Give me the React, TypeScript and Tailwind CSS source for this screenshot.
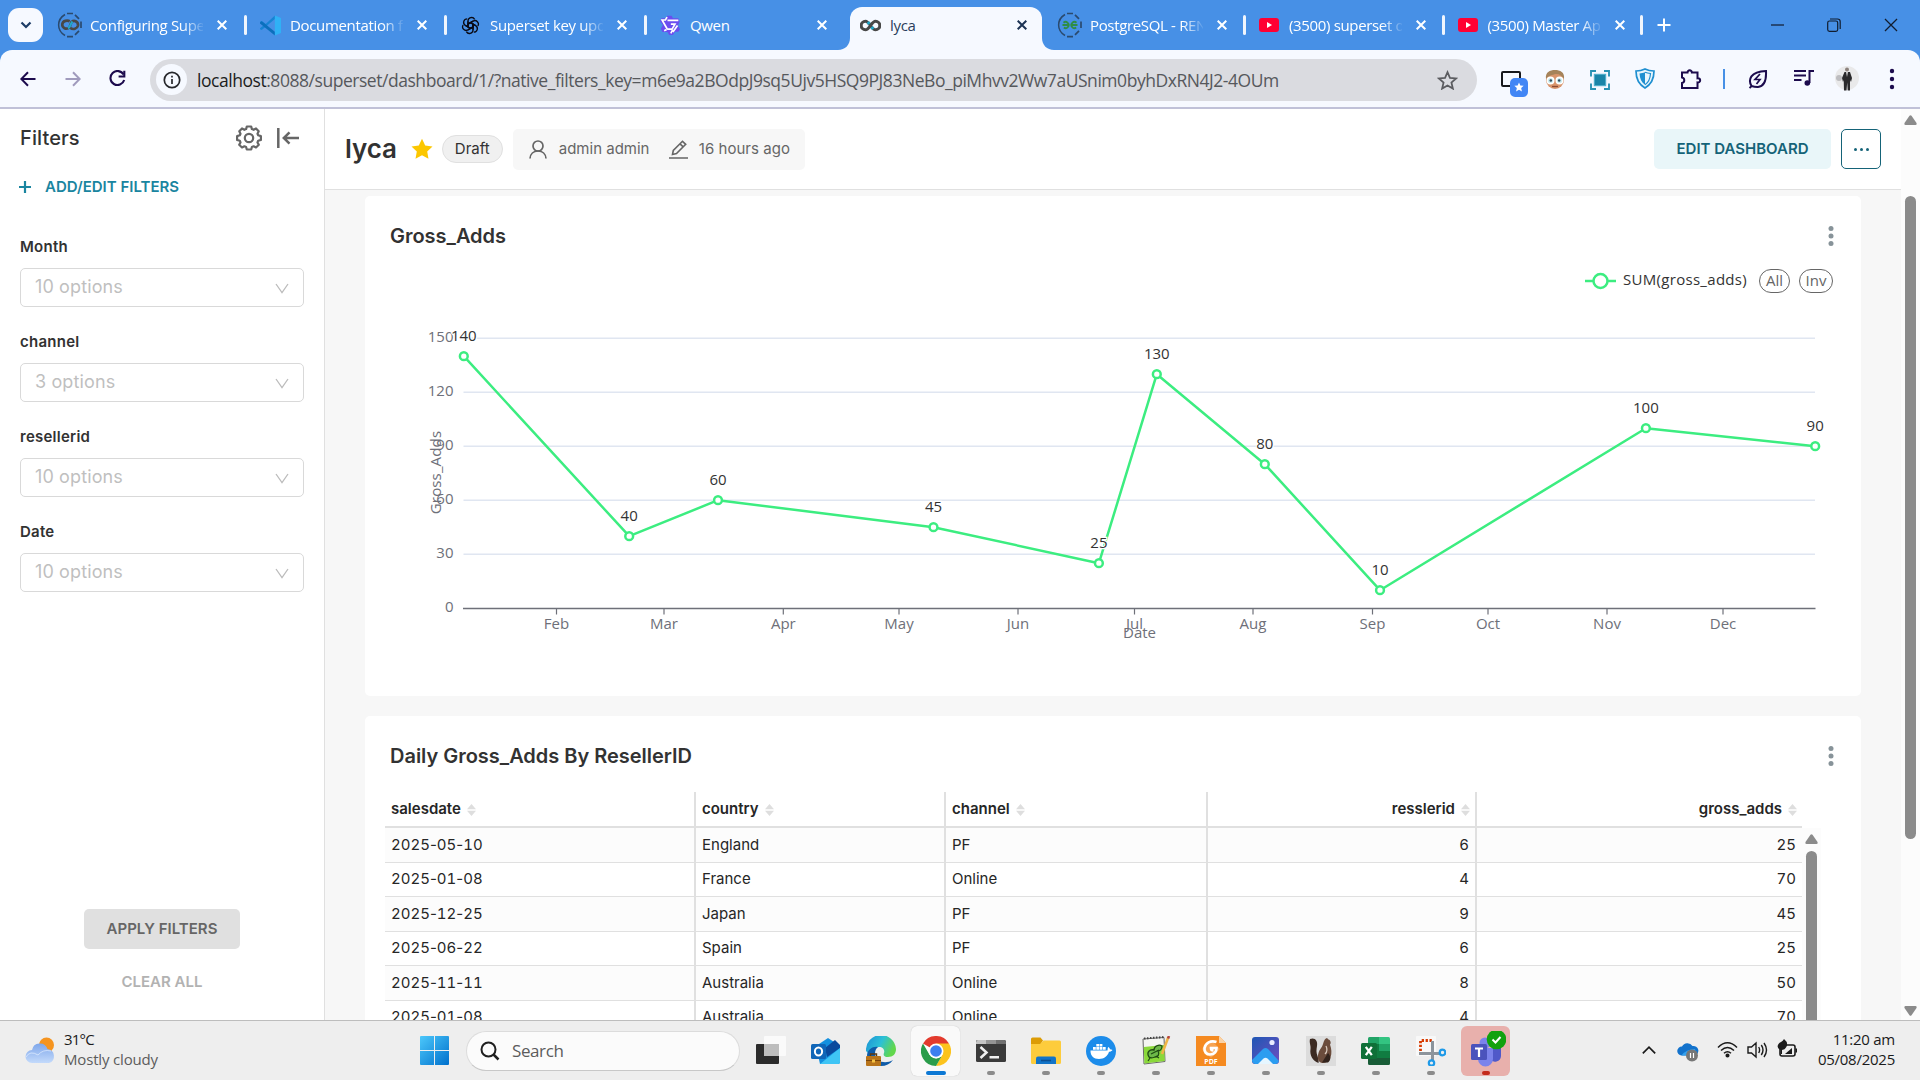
import React from "react";

type Kids = { children?: React.ReactNode };

const SEGOE = "font-['Open_Sans','Noto_Sans',sans-serif]";

/* ---------- Browser tabs ---------- */

function SupersetDocsIcon({ color, glyph }: { color: string; glyph: string }) {
  return (
    <svg width="26" height="26" viewBox="0 0 26 26" fill="none">
      <path d="M8 2.500C-.5 7.500-.5 18.500 8 23.500" stroke="#2b4a6e" strokeWidth="1.500" />
      <path d="M10 1.500h6M18 2.800l4 4M24 9.500v6.500M22 18.800l-4 4M10 24.700h6" stroke="#2b4a6e" strokeWidth="1.700" />
      {glyph === "s" ? (
        <>
          <path d="M12.700 9.200C10.500 8 6 8.500 5.300 12c-.5 4 4 6 7.200 3.500l2-5.500c3-2.500 7 0 6.500 3.500-.7 3.300-5 4.500-7.500 2.500" stroke={color} strokeWidth="2.700" />
          <path d="M11 16.300c2.500-1 2.500-5 4.500-6.800" stroke="#20a7c9" strokeWidth="2.300" />
        </>
      ) : (
        <path d="M5.500 13h7M20.500 13h-7M6.500 10.700a3.100 3.100 0 1 1 .3 4.900M19.500 10.700a3.100 3.100 0 1 0-.3 4.900" stroke={color} strokeWidth="1.800" />
      )}
    </svg>
  );
}

function VsCodeIcon() {
  return (
    <svg width="21" height="21" viewBox="0 0 24 24">
      <path d="M17 0.500L6.500 10.200 2 6.800 0 7.800v1.300L4 12l-4 3v1.200l2 1L17 4.500z" fill="#1684d4" />
      <path d="M0 8.500l2-1.500L17 19v4.500L0 9.600z" fill="#0b6fbd" />
      <path d="M17 .500L24 3.500v17L17 23.500z" fill="#2fb1f5" />
    </svg>
  );
}

function OpenAiIcon() {
  return (
    <svg width="19" height="19" viewBox="0 0 24 24" fill="none" stroke="#0a0a14" strokeWidth="1.700">
      {[0, 60, 120, 180, 240, 300].map((a) => (
        <path key={a} transform={`rotate(${a} 12 12)`} d="M8.800 13.900V6.300a4.500 4.500 0 0 1 8.400-2.100M8.800 10.200l3.200-1.900 6.300 3.700" />
      ))}
    </svg>
  );
}

function QwenIcon() {
  return (
    <svg width="20" height="20" viewBox="0 0 24 24">
      <path d="M9 1h5l1.500 3H22l1.500 4-2 4.500L24 17l-2 3h-4L15.500 24H11l-2-3.500H3L1 16.500 3.500 12 0 7.500 2 4h5z" fill="#6b4df0" />
      <path d="M8.500 2.500L6.500 6H2.500l6 10.500M9 6.500h13M21 12.500l-5.500 8M8.500 17h6l3.500-6h-5M5 19l3-1.500M13 22l2-4" stroke="#fff" strokeWidth="2" fill="none" />
    </svg>
  );
}

function SupersetIcon() {
  return (
    <svg width="21" height="13" viewBox="0 0 21 13" fill="none">
      <path d="M10.500 6.500C8.700 4 7.500 2.200 5.500 2.200a4.200 4.200 0 0 0 0 8.600c2 0 3.200-1.800 5-4.300s3-4.300 5-4.300a4.200 4.200 0 0 1 0 8.600c-2 0-3.200-1.800-5-4.300z" stroke="#484848" strokeWidth="3" />
      <path d="M7.800 3l1.700 2M13.200 10l-1.700-2" stroke="#20a7c9" strokeWidth="3" />
    </svg>
  );
}

function YouTubeIcon() {
  return (
    <svg width="20" height="14" viewBox="0 0 20 14">
      <rect width="20" height="14" rx="3" fill="#ff0033" />
      <path d="M8 4v6l5-3z" fill="#fff" />
    </svg>
  );
}

function Cross({ size = 10, color = "#fff", w = 2 }: { size?: number; color?: string; w?: number }) {
  return (
    <svg width={size} height={size} viewBox="0 0 10 10" className="shrink-0">
      <path d="M.7 .7l8.600 8.600M9.300 .7L.7 9.300" stroke={color} strokeWidth={w} />
    </svg>
  );
}

function Tab({ icon, title, width = "w-[200px]", sep, fade }: { icon: React.ReactNode; title: string; width?: string; sep?: boolean; fade?: boolean }) {
  return (
    <div className={`flex h-full shrink-0 items-center ${width}`}>
      <div className="flex w-[44px] shrink-0 items-center justify-center pl-[4px]">
        <div className="flex w-[27px] items-center justify-center">{icon}</div>
      </div>
      <div className={`w-[113px] shrink-0 overflow-hidden whitespace-nowrap text-[15px] leading-5 tracking-[-0.34px] text-white ${fade ? "[mask-image:linear-gradient(to_right,#000_82%,transparent_102%)]" : ""}`}>
        {title}
      </div>
      <div className="flex w-[38px] shrink-0 justify-center">
        <Cross />
      </div>
      <div className="grow" />
      {sep && <div className="h-5 w-[3px] shrink-0 translate-x-[1px] rounded-full bg-[#f0f5fd]" />}
    </div>
  );
}

function TabBar() {
  return (
    <div className="flex h-[50px] shrink-0 bg-[#4790e6]">
      <div className="flex w-[46px] shrink-0 items-center pl-2">
        <div className="flex h-[34px] w-[35px] items-center justify-center rounded-[11px] bg-[#f6f9ff]">
          <svg width="12" height="8" viewBox="0 0 12 8" fill="none">
            <path d="M1.500 1.500L6 6l4.500-4.500" stroke="#1d3c66" strokeWidth="2.200" />
          </svg>
        </div>
      </div>
      <Tab icon={<SupersetDocsIcon color="#484848" glyph="s" />} title="Configuring Superset" sep fade />
      <Tab icon={<VsCodeIcon />} title="Documentation for" sep fade />
      <Tab icon={<OpenAiIcon />} title="Superset key update" sep fade />
      <Tab icon={<QwenIcon />} title="Qwen" />
      <div className="flex w-[200px] shrink-0 items-end">
        <svg width="12" height="12" viewBox="0 0 12 12" className="-ml-[8px] shrink-0">
          <path d="M12 0v12H0C7 12 12 7 12 0z" fill="#f6f9ff" />
        </svg>
        <div className="flex h-[43px] w-[192px] shrink-0 items-center rounded-t-[12px] bg-[#f6f9ff] pb-[7px]">
          <div className="w-[40px] shrink-0 pl-[10px]">
            <SupersetIcon />
          </div>
          <div className="w-[113px] text-[15px] leading-5 tracking-[-0.3px] text-[#2a3d5c]">lyca</div>
          <div className="flex w-[38px] justify-center">
            <Cross color="#1c3354" />
          </div>
        </div>
        <svg width="12" height="12" viewBox="0 0 12 12" className="shrink-0">
          <path d="M0 0v12h12C5 12 0 7 0 0z" fill="#f6f9ff" />
        </svg>
      </div>
      <Tab icon={<SupersetDocsIcon color="#2f8d46" glyph="g" />} title="PostgreSQL - RENAME" width="w-[199px]" sep fade />
      <Tab icon={<YouTubeIcon />} title="(3500) superset dash" width="w-[198.5px]" sep fade />
      <Tab icon={<YouTubeIcon />} title="(3500) Master Apache" width="w-[198.5px]" sep fade />
      <div className="flex w-[43px] items-center justify-center">
        <svg width="14" height="14" viewBox="0 0 14 14">
          <path d="M7 .5v13M.5 7h13" stroke="#fff" strokeWidth="2" />
        </svg>
      </div>
      <div className="grow" />
      <div className="flex w-[171px] items-center justify-between pl-[22px] pr-[22px] pb-[1px]">
        <svg width="13" height="14" viewBox="0 0 13 14">
          <path d="M0 7h13" stroke="#111c2e" strokeWidth="1.200" />
        </svg>
        <svg width="14" height="14" viewBox="0 0 14 14" fill="none" stroke="#111c2e" strokeWidth="1.200">
          <rect x=".7" y="3" width="10" height="10.300" rx="1.800" />
          <path d="M3 1h7.500a2.700 2.700 0 0 1 2.700 2.700V11" />
        </svg>
        <Cross size={14} color="#111c2e" w={0.9} />
      </div>
    </div>
  );
}

/* ---------- Browser toolbar ---------- */

function Toolbar() {
  const ink = "#1c0b4d";
  return (
    <div className="flex bg-[#4790e6]">
      <div className="flex h-[59px] w-full items-center rounded-t-[12px] border-b-2 border-[#c0c1d8] bg-[#f6f9ff]">
        <div className="flex w-[150px] shrink-0 items-center pl-[20px]">
          <svg width="16" height="16" viewBox="0 0 16 16" fill="none" stroke={ink} strokeWidth="2">
            <path d="M15.500 8H1.500M8 1.300L1.300 8 8 14.700" />
          </svg>
          <svg width="16" height="16" viewBox="0 0 16 16" fill="none" stroke="#a09bbd" strokeWidth="2" className="ml-[29px]">
            <path d="M.5 8h14M8 1.300L14.700 8 8 14.700" />
          </svg>
          <svg width="17" height="17" viewBox="0 0 17 17" fill="none" stroke={ink} strokeWidth="2.100" className="ml-[28px]">
            <path d="M14.600 4.600A7 7 0 1 0 15.200 10" />
            <path d="M15.300 .8v5.700H9.600" />
          </svg>
        </div>
        <div className="flex h-[42px] w-[1327px] shrink-0 items-center rounded-full bg-[#dadbe0] pl-[6px] pr-[19px] translate-y-px">
          <div className="flex h-[31px] w-[31px] shrink-0 items-center justify-center rounded-full bg-[#f6f9ff]">
            <svg width="18" height="18" viewBox="0 0 18 18" fill="none" stroke="#26272b" strokeWidth="1.700">
              <circle cx="9" cy="9" r="7.700" />
              <path d="M9 8v5M9 4.800v1.800" />
            </svg>
          </div>
          <div className="ml-[10px] grow whitespace-nowrap text-[17.5px] leading-6 tracking-[-0.457px] text-[#56585c]">
            <span className="text-[#1c1d20]">localhost</span>:8088/superset/dashboard/1/?native_filters_key=m6e9a2BOdpJ9sq5Ujv5HSQ9PJ83NeBo_piMhvv2Ww7aUSnim0byhDxRN4J2-4OUm
          </div>
          <svg width="21" height="20" viewBox="0 0 24 23" fill="none" stroke="#5b5c60" strokeWidth="2">
            <path d="M12 2.500l2.800 6.600 7.100.6-5.400 4.700 1.700 7L12 17.700l-6.200 3.700 1.700-7L2.100 9.700l7.100-.6z" />
          </svg>
        </div>
        <div className="ml-[24px] flex grow items-center">
          <div className="relative h-[30px] w-[28px] translate-y-[7px]">
            <div className="h-[16px] w-[20px] rounded-[2px] border-2 border-[#17181c]" />
            <div className="absolute left-[9px] top-[7px] flex h-[19px] w-[18px] items-center justify-center rounded-[5px] bg-[#4286f5]">
              <svg width="10" height="10" viewBox="0 0 24 24" fill="#fff">
                <path d="M12 1l3.200 7.500 8 .7-6 5.300 1.800 8L12 18.300 5 22.500l1.800-8-6-5.300 8-.7z" />
              </svg>
            </div>
          </div>
          <svg width="22" height="22" viewBox="0 0 22 22" className="ml-[15px] translate-y-px">
            <circle cx="11" cy="11" r="9" fill="#d8956c" />
            <path d="M2 10C1 3 6 1 11 1s10 2 9 9c-2-3-4-5-8-5C8 6 5 6 2 10z" fill="#a5835a" />
            <circle cx="6.500" cy="11.500" r="3.300" fill="#cdeef2" stroke="#fff" strokeWidth="1.400" />
            <circle cx="15.500" cy="11.500" r="3.300" fill="#cdeef2" stroke="#fff" strokeWidth="1.400" />
            <circle cx="6.800" cy="11.500" r="1.300" fill="#2f4c5c" />
            <circle cx="15.200" cy="11.500" r="1.300" fill="#2f4c5c" />
            <path d="M8 17.500h6" stroke="#8c4a32" strokeWidth="1.300" />
          </svg>
          <svg width="20" height="20" viewBox="0 0 20 20" className="ml-[24px] translate-y-px" fill="none" stroke="#2a93b4" strokeWidth="1.900">
            <path d="M1 6.500V1h5M14 1h5v5.500M19 13.500V19h-5M6 19H1v-5.500" />
            <rect x="4.300" y="4.300" width="11.400" height="11.400" fill="#1a85a8" stroke="#4fb0cb" strokeWidth="1" />
          </svg>
          <svg width="20" height="21" viewBox="0 0 20 21" className="ml-[25px]">
            <path d="M1 3c3 0 6-.5 9-2 3 1.500 6 2 9 2 0 8-3 13.500-9 17C4 16.500 1 11 1 3z" fill="#e9f6fd" stroke="#1f8fd0" strokeWidth="1.700" />
            <path d="M4.500 5.500C6.500 5.300 8 5 10 4.200v12.600C6.500 14.500 4.800 10.500 4.500 5.500z" fill="#1f8fd0" />
            <path d="M10 4.200c2 .8 3.500 1.100 5.500 1.300-.3 5-2 9-5.500 11.300" fill="none" stroke="#1f8fd0" strokeWidth="1.200" />
          </svg>
          <svg width="22" height="22" viewBox="0 0 22 22" className="ml-[25px]" fill="none" stroke={ink} strokeWidth="2">
            <path d="M2 4.500h5.500a2.200 2.200 0 1 1 4.400 0H17.500v5.700a2.200 2.200 0 1 1 0 4.300V20H2v-5a2.800 2.800 0 0 0 0-5.500z" />
          </svg>
          <div className="ml-[21px] h-[20px] w-[2px] bg-[#4790e6]" />
          <svg width="20" height="20" viewBox="0 0 20 20" className="ml-[23px]" fill="none" stroke={ink} strokeWidth="2">
            <path d="M3 17.800L1.500 19M3.500 17C0 11 2 2.500 18 2c.5 10-1.500 15.500-8 16-2.500.1-5-.5-6.500-1z" />
            <path d="M12 5l-5 5.500h5L8.500 15" strokeWidth="1.700" />
          </svg>
          <svg width="20" height="18" viewBox="0 0 20 18" className="ml-[26px] -translate-y-px" fill="none" stroke={ink} strokeWidth="2">
            <path d="M0 2h12M0 6.500h12M0 11h7.500M15.500 14V2H20" />
            <circle cx="13.300" cy="14" r="2.800" fill={ink} stroke="none" />
          </svg>
          <svg width="26" height="26" viewBox="0 0 26 26" className="ml-[20px] -translate-y-px">
            <circle cx="13" cy="13" r="12" fill="#e9e9ea" />
            <circle cx="5" cy="13" r="3" fill="#bdbdc0" />
            <circle cx="13" cy="4.500" r="2" fill="#8b817c" />
            <path d="M10.500 7h5.500l2 6-1 4-1-2v10.500h-2.300l-.5-8-.7 8H10l-.3-10.500-.7 2-1-4z" fill="#2a2a2c" />
            <path d="M12.200 7h1.600l-.8 5z" fill="#fff" />
          </svg>
          <svg width="6" height="22" viewBox="0 0 6 22" className="ml-[29px]" fill={ink}>
            <circle cx="3" cy="3" r="2.200" />
            <circle cx="3" cy="11" r="2.200" />
            <circle cx="3" cy="19" r="2.200" />
          </svg>
        </div>
      </div>
    </div>
  );
}

/* ---------- Filter sidebar ---------- */

const filters = [
  { name: "Month", hint: "10 options" },
  { name: "channel", hint: "3 options" },
  { name: "resellerid", hint: "10 options" },
  { name: "Date", hint: "10 options" },
];

function Sidebar() {
  return (
    <aside className="flex w-[325px] shrink-0 flex-col border-r border-[#e0e0e0] bg-white">
      <div className="flex h-[58px] items-center pl-5 pr-[25px]">
        <h2 className="grow text-[20px] font-medium leading-6 tracking-[0.1px] text-[#323232]">Filters</h2>
        <svg width="26" height="26" viewBox="0 0 26 26" fill="none" stroke="#666" strokeWidth="2.200" strokeLinejoin="round">
          <path d="M10.800 1.500h4.400l.7 2.600 1.700.7 2.400-1.300 2.700 2.800-1.200 2.400.7 1.600 2.700.800v3.800l-2.700.800-.7 1.700 1.300 2.400-2.800 2.700-2.400-1.200-1.700.7-.7 2.500h-4.400l-.7-2.500-1.700-.7-2.400 1.200-2.800-2.700 1.300-2.400-.7-1.700-2.700-.8v-3.800l2.700-.8.7-1.600-1.200-2.400 2.700-2.800 2.400 1.300 1.700-.7z" />
          <circle cx="13" cy="13" r="4.200" />
        </svg>
        <svg width="22" height="20" viewBox="0 0 22 20" fill="none" stroke="#666" strokeWidth="2.500" className="ml-[15px]">
          <path d="M1.300 0v20M22 10H7M12.500 4.300L6.800 10l5.700 5.700" />
        </svg>
      </div>
      <div className="flex h-[40px] items-center pl-[19px] text-[#1a85a0]">
        <svg width="12" height="12" viewBox="0 0 12 12">
          <path d="M6 0v12M0 6h12" stroke="#1a85a0" strokeWidth="2.200" />
        </svg>
        <span className="ml-[14px] text-[15px] font-semibold">ADD/EDIT FILTERS</span>
      </div>
      <div className="mt-[29px] flex grow flex-col px-5">
        {filters.map((f) => (
          <div key={f.name} className="h-[95px]">
            <div className="flex h-[32px] items-start pt-px text-[15px] font-semibold leading-5 tracking-[0.25px] text-[#323232]">{f.name}</div>
            <div className="flex h-[39px] items-center justify-between rounded-[5px] border border-[#d9d9d9] pl-[14px] pr-[14px]">
              <span className="pb-[2px] text-[18px] leading-6 tracking-[0.12px] text-[#bfbfbf]">{f.hint}</span>
              <svg width="14" height="11" viewBox="0 0 14 11" fill="none" className="translate-y-px">
                <path d="M1 1l6 8.500L13 1" stroke="#bcbcbc" strokeWidth="1.300" />
              </svg>
            </div>
          </div>
        ))}
      </div>
      <div className="flex flex-col items-center pb-[28px]">
        <div className="flex h-10 w-[156px] items-center justify-center rounded-[5px] bg-[#e0e0e0] text-[15px] font-semibold text-[#666]">
          APPLY FILTERS
        </div>
        <div className="mt-[23px] text-[15px] font-semibold leading-5 text-[#b2b2b2]">CLEAR ALL</div>
      </div>
    </aside>
  );
}

/* ---------- Dashboard header ---------- */

function Header() {
  return (
    <header className="flex h-[81px] shrink-0 items-center border-b border-[#e0e0e0] bg-white pl-5 pr-5">
      <h1 className="text-[26px] font-semibold leading-8 tracking-[-0.1px] text-[#323232]">lyca</h1>
      <svg width="22" height="21" viewBox="0 0 24 23" fill="#fcc700" className="ml-[14px] -translate-y-px">
        <path d="M12 .8l3.500 7.300 8 1.100-5.800 5.600 1.400 8L12 19l-7.100 3.800 1.400-8L.5 9.200l8-1.100z" />
      </svg>
      <div className="ml-[9px] flex h-[28px] w-[61px] items-center justify-center rounded-full border border-[#e0e0e0] bg-[#f0f0f0] pt-px text-[15px] text-[#323232]">
        Draft
      </div>
      <div className="ml-[10px] flex h-[41px] w-[292px] items-center rounded-[5px] bg-[#f7f7f7] pl-[16px] text-[15px] text-[#666]">
        <svg width="18" height="19" viewBox="0 0 18 19" fill="none" stroke="#666" strokeWidth="1.700">
          <circle cx="9" cy="6" r="5" />
          <path d="M1 18.500C1.300 14 4.500 11 9 11s7.700 3 8 7.500" />
        </svg>
        <span className="ml-[12px] w-[91px] whitespace-nowrap pt-px">admin admin</span>
        <svg width="19" height="19" viewBox="0 0 19 19" fill="none" stroke="#666" strokeWidth="1.600" className="ml-[19px]">
          <path d="M0 18h19M3.500 14.500l.8-4L13.500 1.300l3.200 3L7.500 13.600zM11 3.800l3.200 3" />
        </svg>
        <span className="ml-[11px] pt-px tracking-[0.04px]">16 hours ago</span>
      </div>
      <div className="grow" />
      <div className="flex h-10 w-[177px] items-center justify-center rounded-[5px] bg-[#e9f6f9] text-[15px] font-semibold text-[#156378]">EDIT DASHBOARD</div>
      <div className="ml-[10px] flex h-10 w-10 items-center justify-center gap-[3px] rounded-[5px] border border-[#156378] bg-white">
        <i className="h-[3px] w-[3px] rounded-full bg-[#156378]" />
        <i className="h-[3px] w-[3px] rounded-full bg-[#156378]" />
        <i className="h-[3px] w-[3px] rounded-full bg-[#156378]" />
      </div>
    </header>
  );
}

function Card({ title, className, children }: { title: string; className: string } & Kids) {
  return (
    <section className={`flex w-[1496px] shrink-0 flex-col bg-white ${className}`}>
      <div className="flex h-[80px] shrink-0 items-center justify-between pl-[25px] pr-[27.5px]">
        <h3 className="text-[20px] font-semibold tracking-[-0.02px] text-[#323232]">{title}</h3>
        <svg width="6" height="20" viewBox="0 0 6 20" fill="#879399">
          <circle cx="3" cy="2.500" r="2.500" />
          <circle cx="3" cy="10" r="2.500" />
          <circle cx="3" cy="17.500" r="2.500" />
        </svg>
      </div>
      {children}
    </section>
  );
}

/* ---------- Line chart ---------- */

const points: [number, number][] = [
  [463.8, 140],
  [629.2, 40],
  [718, 60],
  [933.5, 45],
  [1098.9, 25],
  [1156.8, 130],
  [1264.8, 80],
  [1380, 10],
  [1645.9, 100],
  [1815.2, 90],
];
const months: [number, string][] = [
  [556.5, "Feb"],
  [664, "Mar"],
  [783.3, "Apr"],
  [899, "May"],
  [1018, "Jun"],
  [1134.5, "Jul"],
  [1253, "Aug"],
  [1372.5, "Sep"],
  [1488, "Oct"],
  [1607, "Nov"],
  [1723, "Dec"],
];
const yOf = (v: number) => 608.2 - v * 1.8;

function Chart() {
  return (
    <div className={SEGOE}>
      <div className="flex h-[10px] items-center justify-end pr-[28px] text-[15px] text-[#333]">
        <svg width="31" height="20" viewBox="0 0 31 20">
          <path d="M0 10h31" stroke="#3ced80" strokeWidth="2.500" />
          <circle cx="15.500" cy="10" r="7" fill="#fff" stroke="#3ced80" strokeWidth="2.500" />
        </svg>
        <span className="ml-[7px] w-[125px] whitespace-nowrap pb-[4px] tracking-[0.3px]">SUM(gross_adds)</span>
        <span className="ml-[11px] flex h-[24px] w-[31px] items-center justify-center rounded-full border border-[#666] pb-px text-[#666]">All</span>
        <span className="ml-[9px] flex h-[24px] w-[34px] items-center justify-center rounded-full border border-[#666] pb-px text-[#666]">Inv</span>
      </div>
      <svg width="1496" height="390" viewBox="365 286 1496 390" className="block" fontSize="15" fill="#6e7079">
        {[30, 60, 90, 120, 150].map((v) => (
          <path key={v} d={`M463.500 ${Math.round(yOf(v)) + 0.3}H1815`} stroke="#e0e6f1" strokeWidth="1.400" />
        ))}
        {[0, 30, 60, 90, 120, 150].map((v) => (
          <text key={v} x="453.500" y={yOf(v) + 4.2} textAnchor="end">
            {v}
          </text>
        ))}
        <path d="M463 608.500H1815.500" stroke="#6e7079" strokeWidth="1.300" />
        {months.map(([x, m]) => (
          <g key={m}>
            <path d={`M${x} 609v5.500`} stroke="#6e7079" strokeWidth="1.200" />
            <text x={x} y="629" textAnchor="middle">
              {m}
            </text>
          </g>
        ))}
        <text x="1139.500" y="638" textAnchor="middle">
          Date
        </text>
        <text transform="translate(441 472.500) rotate(-90)" textAnchor="middle" letterSpacing="0.150">
          Gross_Adds
        </text>
        <polyline points={points.map(([x, v]) => `${x},${yOf(v)}`).join(" ")} fill="none" stroke="#3ced80" strokeWidth="2.500" strokeLinejoin="bevel" />
        {points.map(([x, v]) => (
          <circle key={x} cx={x} cy={yOf(v)} r="3.900" fill="#fff" stroke="#3ced80" strokeWidth="2.500" />
        ))}
        {points.map(([x, v]) => (
          <text key={x} x={x} y={yOf(v) - 15.3} textAnchor="middle" fill="#333" stroke="#fff" strokeWidth="2.500" paintOrder="stroke">
            {v}
          </text>
        ))}
      </svg>
    </div>
  );
}

/* ---------- Table ---------- */

const rows = [
  ["2025-05-10", "England", "PF", "6", "25"],
  ["2025-01-08", "France", "Online", "4", "70"],
  ["2025-12-25", "Japan", "PF", "9", "45"],
  ["2025-06-22", "Spain", "PF", "6", "25"],
  ["2025-11-11", "Australia", "Online", "8", "50"],
  ["2025-01-08", "Australia", "Online", "4", "70"],
];
const cols = ["salesdate", "country", "channel", "resslerid", "gross_adds"];

function SortIcon() {
  return (
    <svg width="9" height="12" viewBox="0 0 9 12" fill="#dedede" className="ml-[6px]">
      <path d="M0 5.200L4.500 0 9 5.200zM0 6.800L4.500 12 9 6.800z" />
    </svg>
  );
}

/* Tabular digits keep the dates aligned; the hyphens stay proportional. */
function DateText({ value }: { value: string }) {
  return (
    <span>
      {value.split("-").map((part, i) => (
        <React.Fragment key={i}>
          {i > 0 && "-"}
          <span className="tabular-nums">{part}</span>
        </React.Fragment>
      ))}
    </span>
  );
}

const grid = "grid w-[1417px] grid-cols-[311px_250px_262px_269px_325px]";

function Table() {
  return (
    <div className="flex pl-[20px] text-[15px] text-[#262626]">
      <div className="-mt-[4px]">
        <div className={`${grid} h-[36px] border-b-2 border-[#e0e0e0] font-semibold`}>
          {cols.map((c, i) => (
            <div key={c} className={`flex items-center pl-[6px] pt-px ${i > 2 ? "justify-end pr-[5px]" : ""} ${i < 4 ? "border-r-2 border-[#e0e0e0]" : ""}`}>
              {c}
              <SortIcon />
            </div>
          ))}
        </div>
        {rows.map((r, n) => (
          <div key={n} className={`${grid} h-[34.5px] border-b border-[#e0e0e0] ${n % 2 ? "bg-white" : "bg-[#fcfcfc]"}`}>
            {r.map((v, i) => (
              <div key={i} className={`flex items-center pl-[6px] ${i > 2 ? "justify-end pr-[6px] tabular-nums" : ""} ${i < 4 ? "border-r-2 border-[#e0e0e0]" : ""}`}>
                {i === 0 ? <DateText value={v} /> : v}
              </div>
            ))}
          </div>
        ))}
      </div>
      <div className="mt-[32px] flex w-[19px] flex-col items-center bg-[#fcfcfc] pt-[6px]">
        <svg width="13" height="10" viewBox="0 0 13 10" fill="#8b8b8b">
          <path d="M5.500 .8q1-1.200 2 0L12.500 8q.5 2-1 2h-10q-1.500 0-1-2z" />
        </svg>
        <div className="mt-[7px] h-[300px] w-[11px] rounded-t-full bg-[#8b8b8b]" />
      </div>
    </div>
  );
}

/* ---------- Taskbar ---------- */

function AppCell({ children, bar = "gray", box = "" }: { bar?: "none" | "gray" | "blue" | "red"; box?: string } & Kids) {
  const bars = { none: "w-0", gray: "w-2 bg-[#8b8b8b]", blue: "w-5 bg-[#0c78d4]", red: "w-2 bg-[#c42b1c]" };
  return (
    <div className="flex w-[55px] justify-center">
      <div className={`flex h-[50px] w-[49px] flex-col items-center rounded-[6px] ${box}`}>
        <div className="flex h-[50px] w-full items-center justify-center">{children}</div>
        <div className={`-mt-[5px] h-1 shrink-0 rounded-full ${bars[bar]}`} />
      </div>
    </div>
  );
}

function Apps() {
  return (
    <>
      <AppCell bar="none">
        <svg width="30" height="30" viewBox="0 0 30 30">
          <rect x="0" y="8" width="23" height="20" rx="1" fill="#2b2b2b" />
          <rect x="8" y="0" width="22" height="20" rx="1" fill="#fafafa" />
          <rect x="8" y="8" width="15" height="12" fill="#bdbdbd" />
        </svg>
      </AppCell>
      <AppCell bar="none">
        <svg width="30" height="30" viewBox="0 0 30 30">
          <path d="M5 10L17 2l12 8v16a2 2 0 0 1-2 2H9z" fill="#1490df" />
          <path d="M14 12l10-8 5 5v3L16 21z" fill="#0a4a9e" />
          <path d="M9 28L29 12v14a2 2 0 0 1-2 2z" fill="#3fc5f5" />
          <rect x="0" y="8" width="15" height="15" rx="1.500" fill="#1066b8" />
          <ellipse cx="7.500" cy="15.500" rx="3.600" ry="4" fill="none" stroke="#fff" strokeWidth="2" />
        </svg>
      </AppCell>
      <AppCell bar="none">
        <svg width="30" height="30" viewBox="0 0 30 30">
          <defs>
            <linearGradient id="edge" x1="0" y1="0" x2="1" y2=".4">
              <stop offset="0" stopColor="#1b8fd6" />
              <stop offset=".55" stopColor="#2cc0d6" />
              <stop offset="1" stopColor="#62d74c" />
            </linearGradient>
          </defs>
          <path d="M0 15A15 15 0 0 1 30 13c0 5-3 8-8 8-4 0-5-2-4-4 1-3-1-6-5-6-5 0-8 4-8 9z" fill="url(#edge)" />
          <path d="M1 19c1-6 6-9 11-8-4 3-4 9 0 13 4 3 10 3 15 0-3 4-7 6-12 6C7 30 1 26 1 19z" fill="#0f5ba8" />
          <rect x="0" y="20" width="15" height="10" rx="1" fill="#b8741a" />
          <path d="M0 24.500h15" stroke="#7a4508" strokeWidth="1" />
          <path d="M4.500 20v-2h6v2" stroke="#5d3a12" strokeWidth="1.400" fill="none" />
          <rect x="6" y="23.500" width="3" height="3" fill="#f6c343" />
        </svg>
      </AppCell>
      <AppCell bar="blue" box="bg-[#f9f9f9] shadow-[0_0_1px_#b5b5b5]">
        <svg width="30" height="30" viewBox="0 0 30 30">
          <circle cx="15" cy="15" r="15" fill="#fff" />
          <path d="M15 15L2 7.500A15 15 0 0 1 28 7.500z" fill="#e33b2e" />
          <path d="M15 7.500H28A15 15 0 0 1 15 30l6.500-11.500z" fill="#fcc31e" />
          <path d="M2 7.500L8.500 18.700 15 22.500l5.500-2L15 30A15 15 0 0 1 2 7.500z" fill="#2a9c4a" />
          <circle cx="15" cy="15" r="7.500" fill="#fff" />
          <circle cx="15" cy="15" r="5.800" fill="#3c7ff0" />
        </svg>
      </AppCell>
      <AppCell>
        <svg width="30" height="22" viewBox="0 0 30 22">
          <rect width="30" height="22" rx="1.500" fill="#3a3a3a" />
          <path d="M1.500 0H10v4H0V1.500z" fill="#c4c4c4" />
          <path d="M10 0h10v4H10z" fill="#949494" />
          <path d="M20 0h8.500L30 1.500V4H20z" fill="#707070" />
          <path d="M4.500 7l6 5.500-6 5.500M13.500 17.300H23" stroke="#f0f0f0" strokeWidth="2.500" fill="none" />
        </svg>
      </AppCell>
      <AppCell>
        <svg width="30" height="28" viewBox="0 0 30 28">
          <path d="M0 2a1.500 1.500 0 0 1 1.500-1.500h8L12 3.500 9 8H0z" fill="#dc9c06" />
          <path d="M0 7h9l3.500-3.500H28.500A1.500 1.500 0 0 1 30 5v20.500a1.500 1.500 0 0 1-1.500 1.500h-27A1.500 1.500 0 0 1 0 25.500z" fill="#fdcc3c" />
          <path d="M5 27v-5.500a2 2 0 0 1 2-2h16a2 2 0 0 1 2 2V27z" fill="#1274c8" />
          <path d="M10 23.500h10" stroke="#0c4f92" strokeWidth="1.600" />
        </svg>
      </AppCell>
      <AppCell>
        <svg width="30" height="30" viewBox="0 0 30 30">
          <circle cx="15" cy="15" r="15" fill="#1c8cea" />
          <path d="M4.500 14.500h17c.3-1.500 0-2.500.8-3.500 1 .5 1.500 1.300 1.600 2.200 1 0 1.800.2 2.600.8-.8 1.300-2 1.700-3.500 1.800C21.500 20.500 18 23 13 23c-5.500 0-8.500-3-8.500-8.500z" fill="#fff" />
          <path d="M7 11h2.800v2.700H7zM10.300 11h2.800v2.700h-2.800zM13.600 11h2.800v2.700h-2.800zM16.900 11h2.800v2.700h-2.800zM10.300 8h2.800v2.600h-2.800zM13.600 8h2.800v2.600h-2.800z" fill="#fff" />
        </svg>
      </AppCell>
      <AppCell>
        <svg width="30" height="30" viewBox="0 0 30 30">
          <path d="M2 3l21-1.500 1 24-21 2.500z" fill="#f4f5f2" stroke="#666" strokeWidth="1" />
          <path d="M2.800 11l20.400-2 .6 16-20.400 2.500z" fill="#8ad83a" />
          <path d="M8 21c-3-5 1-8 5-7 0-4 5-6 8-4 0 3-2 5-4 5 2 3 0 6-3 6-2 1-5 1-6 0z" fill="#6cb848" stroke="#1f4a14" strokeWidth="1.300" />
          <path d="M10 18l8-4M9 22l-2 3M15 20l3 2" stroke="#1f4a14" strokeWidth="1.200" />
          <path d="M3 2.500l20-1.500" stroke="#444" strokeWidth="2" strokeDasharray="1.500 1.500" />
          <path d="M27 2l-6 16" stroke="#f0b548" strokeWidth="2.600" />
          <path d="M28 0l-1 2.500" stroke="#b8453a" strokeWidth="2.600" />
        </svg>
      </AppCell>
      <AppCell>
        <svg width="30" height="30" viewBox="0 0 30 30">
          <path d="M0 0h23l7 7v23H0z" fill="#f58a20" />
          <path d="M23 0v7h7z" fill="#fbd3a5" />
          <path d="M15 4l9 9-9 9-9-9z" fill="#f7a453" />
          <path d="M20.500 6c-6-2-11 1-12 6-.5 4 2 6.500 5.500 6.500 5 0 6.500-3.500 6.500-6.500h-5.500c0 2 1 2.500 2.500 2.500" stroke="#fff" strokeWidth="2.700" fill="none" />
          <text x="15" y="28" textAnchor="middle" fontSize="7" fontWeight="700" fill="#fff">PDF</text>
        </svg>
      </AppCell>
      <AppCell>
        <svg width="27" height="27" viewBox="0 0 27 27">
          <defs>
            <linearGradient id="photos" x1="0" y1="0" x2="1" y2="1">
              <stop offset="0" stopColor="#1e56b4" />
              <stop offset="1" stopColor="#6f4fc0" />
            </linearGradient>
          </defs>
          <rect width="27" height="27" rx="3" fill="url(#photos)" />
          <path d="M0 23l11-11q2.500-2 5 0l11 12q-1 3-3 3H3q-2 0-3-3z" fill="#2c9df0" />
          <path d="M6 27l5.500-5.500q2-1.500 4 0L21 27z" fill="#e6f6ff" />
          <circle cx="20" cy="5.500" r="2.600" fill="#e9edff" />
        </svg>
      </AppCell>
      <AppCell>
        <svg width="30" height="30" viewBox="0 0 30 30">
          <rect width="30" height="30" fill="#dcdcdc" />
          <path d="M4 3c5-2 8 2 7 7-.6 4-1 6 .5 10 .8 3 1.500 5 1 7-6-2-9-8-8-14C5 9 3 7 4 3z" fill="#3b2a22" />
          <path d="M17 8c1-4 2.500-6 4-6l1.500 1.500c2 .5 3 3.500 1.500 5 1.500 4 2 9 .5 13-1 4-4 5.500-8.500 5.500-4-1-5-5-3.500-10 1-4 3.500-5 4.500-9z" fill="#6b4c3c" />
          <path d="M20 10c1.500 3 1 6-1 8" stroke="#d8c8bc" strokeWidth="1.300" fill="none" />
          <path d="M22 17c3 3 3 7 0 9.500h-6z" fill="#33241d" />
        </svg>
      </AppCell>
      <AppCell>
        <svg width="29" height="28" viewBox="0 0 29 28">
          <path d="M7 1.500A1.500 1.500 0 0 1 8.500 0H18v7H7z" fill="#21a366" />
          <path d="M18 0h9.500A1.500 1.500 0 0 1 29 1.500V7H18z" fill="#33c481" />
          <path d="M7 7h11v14H7z" fill="#107c41" />
          <path d="M18 7h11v7H18z" fill="#21a366" />
          <path d="M18 14h11v7H18z" fill="#107c41" />
          <path d="M7 21h22v5.500a1.500 1.500 0 0 1-1.500 1.500h-19A1.500 1.500 0 0 1 7 26.500z" fill="#185c37" />
          <rect y="6" width="16" height="16" rx="1.500" fill="#0f7038" />
          <path d="M4.800 9.800l6 8.400M10.800 9.800l-6 8.400" stroke="#fff" strokeWidth="2.300" />
        </svg>
      </AppCell>
      <AppCell>
        <svg width="30" height="30" viewBox="0 0 30 30" fill="none">
          <rect width="20" height="20" rx="1" fill="#f8f8f8" />
          <path d="M4.500 15V4.500H16" stroke="#d83b01" strokeWidth="2.800" strokeDasharray="2.300 1.600" />
          <path d="M3 17.500h22M16.500 5v19" stroke="#8c949b" strokeWidth="3" />
          <circle cx="26.500" cy="16.500" r="2.800" stroke="#1f9ae8" strokeWidth="2.200" />
          <circle cx="15.500" cy="27" r="2.700" stroke="#1f9ae8" strokeWidth="2.200" />
        </svg>
      </AppCell>
      <AppCell bar="red" box="bg-[#e8b0ac]">
        <svg width="40" height="40" viewBox="0 0 40 40">
          <circle cx="19" cy="12" r="5.500" fill="#7b83eb" />
          <circle cx="31" cy="15" r="4" fill="#5059c9" />
          <path d="M24 17h11v8a6 6 0 0 1-11 3z" fill="#5059c9" />
          <path d="M12 17h15v11a7.500 7.500 0 0 1-15 0z" fill="#7b83eb" />
          <rect x="5" y="13" width="16" height="16" rx="1.500" fill="#4b53bc" />
          <path d="M9 17.500h8M13 17.500V26" stroke="#fff" strokeWidth="2.200" />
          <circle cx="30.500" cy="8.500" r="9.800" fill="#13a10e" />
          <path d="M26.500 8.500l3 3 5-5.500" stroke="#fff" strokeWidth="2" fill="none" />
        </svg>
      </AppCell>
    </>
  );
}

function Taskbar() {
  return (
    <footer className={`flex h-[60px] shrink-0 items-center border-t border-[#bdbdbd] bg-[#eeeeee] ${SEGOE}`}>
      <div className="flex w-[420px] shrink-0 items-center pl-[25px]">
        <svg width="31" height="27" viewBox="0 0 31 27">
          <defs>
            <linearGradient id="cloud" x1="0" y1="0" x2="0" y2="1">
              <stop offset="0" stopColor="#7ea6ea" />
              <stop offset="1" stopColor="#c3dafb" />
            </linearGradient>
          </defs>
          <circle cx="21.500" cy="8" r="7.500" fill="#f5941f" />
          <path d="M7 13a8 8 0 0 1 15.500-1 7.200 7.200 0 0 1 1.500 14H7a6.500 6.500 0 0 1 0-13z" fill="url(#cloud)" />
          <path d="M1 20q4-7 12-2 5-6 13-4" stroke="#e2eeff" strokeWidth="1" fill="none" opacity=".7" />
        </svg>
        <div className="ml-[8px] pb-[4px] text-[15px] leading-5 tracking-[-0.17px]">
          <div className="tracking-[-0.8px] text-[#1b1b1b]">31°C</div>
          <div className="text-[#5c5c5c]">Mostly cloudy</div>
        </div>
      </div>
      <svg width="29" height="29" viewBox="0 0 29 29" className="shrink-0">
        <defs>
          <linearGradient id="win" x1="0" y1="0" x2="1" y2="1">
            <stop offset="0" stopColor="#4cc8fb" />
            <stop offset="1" stopColor="#0070cc" />
          </linearGradient>
        </defs>
        <path d="M0 1q0-1 1-1h13v14H0zM15 0h13q1 0 1 1v13H15zM0 15h14v14H1q-1 0-1-1zM15 15h14v13q0 1-1 1H15z" fill="url(#win)" />
      </svg>
      <div className="ml-[17px] flex h-[40px] w-[274px] shrink-0 items-center rounded-full border border-[#dcdcdc] border-b-[#c8c8c8] bg-[#fbfbfb] pl-[13px]">
        <svg width="20" height="20" viewBox="0 0 20 20" fill="none" stroke="#1f1f1f">
          <circle cx="8.500" cy="8.500" r="7" strokeWidth="2" />
          <path d="M13.500 13.500l5 5" strokeWidth="2.500" />
        </svg>
        <span className="ml-[12px] text-[17px] tracking-[-0.4px] text-[#5c5c5c]">Search</span>
      </div>
      <div className="ml-[3px] flex shrink-0">
        <Apps />
      </div>
      <div className="grow" />
      <div className="flex shrink-0 items-center pr-[25px]">
        <svg width="14" height="8" viewBox="0 0 14 8" fill="none" stroke="#1b1b1b" strokeWidth="1.700" className="-translate-y-px">
          <path d="M.8 7.300L7 1.200l6.200 6.100" />
        </svg>
        <svg width="22" height="22" viewBox="0 0 22 22" className="ml-[21px] translate-y-px">
          <path d="M4.500 14.500a4.500 4.500 0 0 1 .5-9 6 6 0 0 1 10.500-.5 4.800 4.800 0 0 1 2 9.500z" fill="#1272cc" />
          <path d="M4.500 14.500Q9 8 18 8q2 5-2 6.500z" fill="#33a0ee" />
          <circle cx="15" cy="14.500" r="6" fill="#777" />
          <path d="M13.500 12v5M16.500 12v5" stroke="#fff" strokeWidth="1.200" />
        </svg>
        <svg width="21" height="17" viewBox="0 0 21 17" fill="none" stroke="#1b1b1b" strokeWidth="1.500" className="ml-[18px] -translate-y-px">
          <path d="M1 6.500q9.500-9.500 19 0M4 9.500q6.500-6 13 0M7 12.300q3.500-3 7 0" />
          <circle cx="10.500" cy="14.500" r="1.300" fill="#1b1b1b" />
        </svg>
        <svg width="21" height="18" viewBox="0 0 21 18" fill="none" stroke="#1b1b1b" strokeWidth="1.400" className="ml-[9px] -translate-y-px">
          <path d="M1 6h3.500L9 2v14l-4.500-4H1zM11.700 6q1.800 3 0 6M14.300 4q3.400 5 0 10M17 2q5 7 0 14" />
        </svg>
        <svg width="21" height="18" viewBox="0 0 21 18" fill="none" className="ml-[9px] -translate-y-[3px]">
          <rect x="3" y="6" width="15" height="11" rx="2" stroke="#1b1b1b" strokeWidth="1.600" />
          <path d="M18.500 9.500h1.500v4h-1.500z" fill="#1b1b1b" />
          <path d="M7 0q5 4 2 8.500-1 2-4 2.500v4H3.500V11Q-1 9 1.500 5 2.500 3.500 4 3 6 2 7 0z" fill="#1b1b1b" />
          <path d="M8 15l7-6v6z" fill="#1b1b1b" />
        </svg>
        <div className="w-[97px] pb-[4px] text-right text-[15px] leading-5 tracking-[-0.25px] text-[#1b1b1b]">
          <div>11:20 am</div>
          <div>05/08/2025</div>
        </div>
      </div>
    </footer>
  );
}

export default function App() {
  return (
    <div className="flex h-[1080px] w-[1920px] flex-col overflow-hidden bg-white font-['Inter',sans-serif]">
      <div className={`shrink-0 ${SEGOE}`}>
        <TabBar />
        <Toolbar />
      </div>
      <div className="flex h-[911px] shrink-0 overflow-hidden">
        <Sidebar />
        <div className="flex w-[1576px] shrink-0 flex-col overflow-hidden">
          <Header />
          <main className="flex grow flex-col gap-5 overflow-hidden bg-[#f7f7f7] pl-10 pt-[6px]">
            <Card title="Gross_Adds" className="h-[500px] rounded-[5px]">
              <Chart />
            </Card>
            <Card title="Daily Gross_Adds By ResellerID" className="h-[500px] rounded-t-[5px]">
              <Table />
            </Card>
          </main>
        </div>
        <div className="flex w-[19px] flex-col items-center bg-[#fcfcfc] pb-[4px] pt-[6px]">
          <svg width="13" height="10" viewBox="0 0 13 10" fill="#8b8b8b">
            <path d="M5.500 .8q1-1.200 2 0L12.500 8q.5 2-1 2h-10q-1.500 0-1-2z" />
          </svg>
          <div className="mt-[71px] h-[643px] w-[11px] rounded-full bg-[#8b8b8b]" />
          <div className="grow" />
          <svg width="13" height="10" viewBox="0 0 13 10" fill="#8b8b8b" className="rotate-180">
            <path d="M5.500 .8q1-1.200 2 0L12.500 8q.5 2-1 2h-10q-1.500 0-1-2z" />
          </svg>
        </div>
      </div>
      <Taskbar />
    </div>
  );
}
